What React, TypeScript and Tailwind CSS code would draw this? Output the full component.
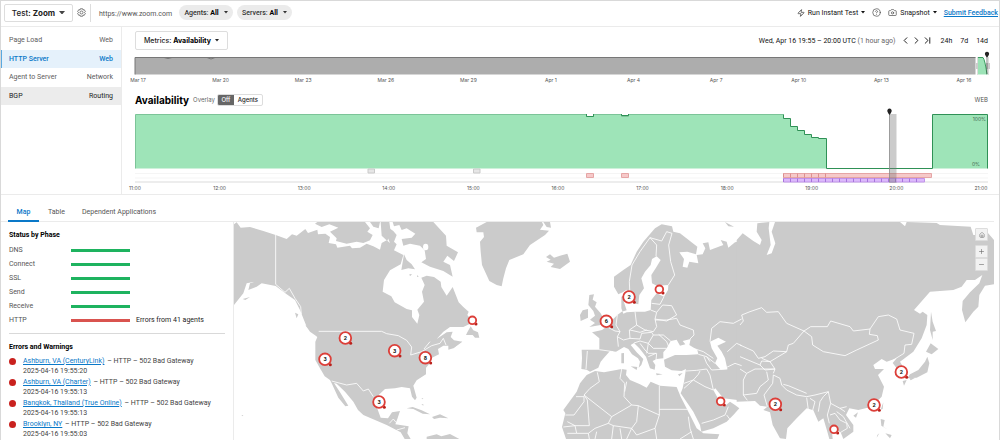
import React from "react";
import { Camera, ChevronLast, ChevronLeft, ChevronRight, CircleHelp, House, Minus, Plus, Zap } from "lucide-react";

const testTypes = [
  { name: "Page Load", layer: "Web", style: "border-transparent text-[#5c5c5c]" },
  { name: "HTTP Server", layer: "Web", style: "border-[#5aa9e0] bg-[#e5f1fb] text-[#0a78c8] font-medium" },
  { name: "Agent to Server", layer: "Network", style: "border-transparent text-[#5c5c5c]" },
  { name: "BGP", layer: "Routing", style: "border-transparent bg-[#ececec] text-[#222]" },
];

const dates = ["Mar 17", "Mar 20", "Mar 23", "Mar 26", "Mar 29", "Apr 1", "Apr 4", "Apr 7", "Apr 10", "Apr 13", "Apr 16"];
const hours = ["11:00", "12:00", "13:00", "14:00", "15:00", "16:00", "17:00", "18:00", "19:00", "20:00", "21:00"];
const phases = ["DNS", "Connect", "SSL", "Send", "Receive", "HTTP"];

const errors = [
  { agent: "Ashburn, VA (CenturyLink)", time: "2025-04-16 19:55:20" },
  { agent: "Ashburn, VA (Charter)", time: "2025-04-16 19:55:13" },
  { agent: "Bangkok, Thailand (True Online)", time: "2025-04-16 19:55:13" },
  { agent: "Brooklyn, NY", time: "2025-04-16 19:55:03" },
];

const clusters = [
  { x: 334, y: 348, count: 2 },
  { x: 273, y: 412, count: 3 },
  { x: 482, y: 386, count: 3 },
  { x: 574, y: 407, count: 8 },
  { x: 435, y: 540, count: 3 },
  { x: 715, y: 295, count: 0 },
  { x: 1185, y: 225, count: 2 },
  { x: 1117, y: 298, count: 6 },
  { x: 1276, y: 202, count: 0 },
  { x: 1460, y: 538, count: 0 },
  { x: 2002, y: 450, count: 2 },
  { x: 1624, y: 547, count: 2 },
  { x: 1920, y: 549, count: 2 },
  { x: 1800, y: 622, count: 0 },
];

const redTicks = [0, 7, 14, 21, 28, 35, 42];
const purpleTicks = Array.from({ length: 20 }, (_, i) => i * 7);

function Caret({ className = "w-[5px]" }: { className?: string }) {
  return (
    <svg viewBox="0 0 10 6" className={className} fill="currentColor" aria-hidden="true">
      <path d="M0 0h10L5 6z" />
    </svg>
  );
}

function Gear() {
  return (
    <svg viewBox="0 0 24 24" className="size-[9px] text-[#555]" fill="none" stroke="currentColor" strokeWidth="2" strokeLinejoin="round" aria-hidden="true">
      <path d="M9 2h6l1 3.2 3.3-.7 3 5.2-2.3 2.3 2.3 2.3-3 5.2-3.3-.7L15 22H9l-1-3.2-3.3.7-3-5.2L4 12 1.700 9.700l3-5.200L8 5.200z" />
      <circle cx="12" cy="12" r="4" />
    </svg>
  );
}

function Header() {
  return (
    <header className="flex h-[26px] items-center border-b border-[#ebebeb] pb-[2px] pl-[3px] pr-px">
      <button className="flex h-[18px] w-[69px] shrink-0 items-center justify-center gap-1 whitespace-nowrap rounded-[2px] border border-[#ddd] font-['Inter',sans-serif] text-[8px] font-medium">
        <span>Test: <b className="font-bold">Zoom</b></span>
        <Caret className="w-[6px] text-[#444]" />
      </button>
      <button className="ml-1 shrink-0" aria-label="Test settings"><Gear /></button>
      <span className="ml-1 h-[18px] w-px bg-[#ddd]" />
      <span className="ml-2 mt-[3px] w-[72px] whitespace-nowrap text-[#555]">https://www.zoom.com</span>
      <div className="ml-2 flex gap-1">
        <button className="flex h-[15px] w-[54px] items-center justify-center gap-[5px] whitespace-nowrap rounded-full bg-[#ebebeb] font-medium text-[#333]">
          <span>Agents: <b className="text-black">All</b></span><Caret className="w-1" />
        </button>
        <button className="flex h-[15px] w-[55px] items-center justify-center gap-[5px] whitespace-nowrap rounded-full bg-[#ebebeb] font-medium text-[#333]">
          <span>Servers: <b className="text-black">All</b></span><Caret className="w-1" />
        </button>
      </div>
      <div className="ml-auto flex items-center whitespace-nowrap text-[#111]">
        <button className="flex items-center gap-[3px]"><Zap className="size-2" strokeWidth={1.8} />Run Instant Test<Caret className="w-1" /></button>
        <button className="ml-[7px]" aria-label="Help"><CircleHelp className="size-[9px] text-[#444]" strokeWidth={1.8} /></button>
        <button className="ml-[7px] flex items-center gap-[3px]"><Camera className="size-[9px] text-[#444]" strokeWidth={1.8} />Snapshot<Caret className="w-1" /></button>
        <a href="#feedback" className="ml-[7px] font-medium text-[#0a78c8] underline">Submit Feedback</a>
      </div>
    </header>
  );
}

function Timeline() {
  return (
    <svg viewBox="0 0 853 23" preserveAspectRatio="none" className="mt-[2px] h-[23px] w-full overflow-visible" aria-label="Availability history">
      <path d="M0 5.500H840.500V22.500H0z" fill="#adadad" />
      <path d="M0 22.500V5.500H840.500" fill="none" stroke="#777" />
      <path d="M29 5.500q4 2 8 0M72 5.500q4 3 8 0" fill="none" stroke="#777" />
      <path d="M842.500 5V23M853.500 5V23" stroke="#ddd" />
      <rect x="841" y="11" width="3" height="6" fill="#ccc" />
      <rect x="851" y="11" width="4" height="6" fill="#ccc" />
      <path d="M843 22.500V5.500H848Q850 8 852 22.500z" fill="#9de3b7" />
      <path d="M843 5.500H848Q850 8 852 22.500" fill="none" stroke="#3a9a5f" />
      <path d="M852 3V22" stroke="#333" strokeWidth=".6" />
      <path d="M850 2.400a2.100 2.100 0 1 1 4 0Q853.500 4 852 5.500Q850.500 4 850 2.400z" fill="#222" />
    </svg>
  );
}

function AvailabilityChart() {
  return (
    <div className="relative mt-[2px]">
      <svg viewBox="0 0 853 75" preserveAspectRatio="none" className="h-[75px] w-full" aria-label="Availability over time">
        <path d="M0 65.500H853M0 70H853" stroke="#f5f5f5" />
        <path d="M0 74H853" stroke="#ededed" strokeWidth="2" />
        <path
          d="M.500 60.500V6.500H451.500V8.500H458.500V6.500H486.500V8.500H493.500V6.500H648.500V10.500H655.500V18.500H662.500V22.500H669.500V26.500H676.500V29.500H683.500V30.500H691.500V60.500H797.500V6.500H852.500V60.500z"
          fill="#9ee4b8"
        />
        <path
          d="M.500 60.500V6.500H451.500V8.500H458.500V6.500H486.500V8.500H493.500V6.500H648.500"
          fill="none" stroke="#7cc498"
        />
        <path
          d="M451.500 6V8.500H458.500V6M486.500 6V7.500H493.500V6M648.500 6.500V10.500H655.500V18.500H662.500V22.500H669.500V26.500H676.500V29.500H683.500V30.500H691.500V60.500H797.500V6.500H852.500V60.500"
          fill="none" stroke="#2f9156"
        />
        <path d="M452 5V7.500H458V5zM487 5V6.500H493V5z" fill="#fff" />
        <g fill="#e6e6e6" stroke="#cacaca">
          <path d="M233 61H239.500V65H233zM338.500 61H345V65H338.500z" />
        </g>
        <g fill="#f6c9c9" stroke="#e5a5a5">
          <path d="M451.500 65.500H458.500V69.500H451.500zM486.500 65.500H493.500V69.500H486.500z" />
          <path d="M648.500 65.500H796.500V69.500H648.500z" />
          {redTicks.map((t) => <path key={t} d={`M${648.5 + t} 65.500V69.500`} stroke="#dd8f8f" />)}
        </g>
        <g fill="#dcb9fb" stroke="#c193ea">
          <path d="M648.500 70.500H789.500V74H648.500z" />
          {purpleTicks.map((t) => <path key={t} d={`M${648.5 + t} 70.500V74`} stroke="#a774dc" />)}
        </g>
        <rect x="754" y="6" width="7.500" height="69" fill="#777" fillOpacity=".38" />
        <path d="M754.500 6V74" stroke="#888" strokeWidth=".7" />
        <path d="M752.400 3.400a2.200 2.200 0 1 1 4.200 0Q756 5 754.500 7Q753 5 752.400 3.400z" fill="#222" />
      </svg>
      <span className="absolute right-[2px] top-[7px] font-['Inter',sans-serif] text-[5px] leading-[8px] text-[#3f6b50]">100%</span>
      <span className="absolute right-2 top-[52px] font-['Inter',sans-serif] text-[5px] leading-[8px] text-[#3f6b50]">0%</span>
    </div>
  );
}

function WorldMap() {
  return (
    <svg viewBox="0 0 2280 654" preserveAspectRatio="xMidYMin slice" className="block h-[218px] w-full" role="img" aria-label="Agents on a world map">
      <g fill="#cbcbcb">
        <g transform="translate(-12 -21)">
          <path d="M12 28L20 22L32 38L60 36L100 48L137 60L170 72L186 58L200 62L226 42L234 54L262 44L264 58L286 56L300 66L296 84L318 88L322 98L360 92L366 100L390 98L410 86L430 94L450 104L455 84L470 76L480 84L470 60L478 40L490 48L500 60L492 80L500 88L492 106L520 120L512 148L480 166L462 195L458 230L484 244L494 262L530 282L546 286L546 306L562 326L568 300L562 284L582 260L576 230L584 210L574 188L590 182L612 186L632 200L634 216L650 242L668 216L686 262L700 276L716 290L712 300L730 322L700 336L660 336L640 350L620 372L650 352L668 350L662 366L672 376L697 380L670 400L655 404L655 392L640 392L624 402L627 418L606 428L600 444L588 458L588 478L560 496L550 512L560 548L555 556L546 545L540 520L515 516L495 520L465 522L446 540L440 575L452 608L474 610L486 592L510 588L502 612L496 628L536 634L532 655L542 672L524 672L512 652L470 630L400 600L384 585L370 560L345 530L320 506L312 504L330 532L355 572L346 574L325 548L305 505L300 495L284 484L270 460L256 435L256 380L262 366L255 358L230 335L210 285L195 255L170 238L137 213L95 205L80 215L55 225L60 205L74 200L50 205L40 235L12 270z" />
          <path d="M262 21L255 26L275 36L298 28L325 38L300 50L320 70L318 78L350 86L380 80L400 84L420 76L428 60L412 50L420 40L405 21zM420 21L430 35L446 40L450 21zM452 21L455 62L472 78L482 50L478 21z" />
          <path d="M488 21L492 34L508 30L515 45L530 40L556 56L545 68L515 72L520 92L540 86L570 92L584 106L588 132L574 142L600 155L640 168L668 185L660 150L640 140L652 122L672 138L684 112L650 92L648 62L610 21zM522 118L514 165L535 160L555 163L545 148L530 135zM538 178L546 177L540 184zM562 180L566 185L561 186z" />
          <path d="M712 352L722 334L730 346L744 352L748 368L735 368L728 360L708 360zM660 384L672 392L697 378L670 400zM38 252L60 246L46 255zM195 293L205 298L200 310zM226 330L258 350L266 368L240 350z" />
          <path d="M530 580L548 576L575 586L600 598L578 596L550 582zM606 606L630 598L655 610L630 608L612 612zM574 568L580 568L580 572zM574 550L580 550L578 553zM590 665L620 658L634 664L660 657L688 672L590 672zM34 600L40 601L38 604z" />
        </g>
        <g transform="translate(738 -21)">
          <path d="M20 21L-12 38L-10 52L10 52L12 66L0 80L2 110L6 150L28 198L50 210L65 214L70 190L78 160L88 135L130 118L150 90L195 60L207 47L180 44L190 30L186 21zM190 21L210 21L213 38L200 36z" />
          <path d="M198 126L210 118L222 128L240 122L262 116L270 140L240 162L212 156L222 146L200 140L212 134z" />
          <path d="M328 240L342 238L338 254L350 262L345 275L362 295L374 318L362 330L328 336L345 324L330 314L345 302L340 288L325 270zM308 286L324 282L324 308L302 318L300 300z" />
          <path d="M402 185L402 215L415 238L428 232L440 224L450 245L460 265L475 268L478 240L492 220L484 190L495 170L512 150L516 132L530 124L542 135L528 158L514 180L516 205L530 212L565 210L564 225L552 245L530 235L514 255L512 285L495 290L465 290L440 292L430 296L424 280L424 245L436 240L432 262L440 286L425 290L412 300L400 312L380 335L366 345L336 352L358 370L358 404L305 404L306 430L304 462L320 464L330 470L355 458L362 440L372 428L390 408L408 410L432 396L445 402L456 418L474 430L480 440L476 458L484 450L490 432L470 412L452 390L462 384L478 400L498 425L510 460L524 464L526 450L518 438L530 432L550 430L550 412L560 400L572 378L590 374L600 392L616 388L608 378L632 372L628 390L652 405L655 418L620 420L585 420L552 434L555 455L575 466L605 468L618 462L612 500L608 520L602 535L640 590L660 630L664 650L700 640L740 620L760 600L778 580L765 570L750 560L732 575L722 565L700 525L706 520L730 550L790 557L790 78L765 82L745 98L740 80L722 75L730 90L690 105L685 82L668 85L676 100L668 118L650 120L655 145L628 140L622 158L608 155L612 132L598 112L622 110L648 118L652 95L600 55L580 50L576 34L545 28L525 40L490 80L470 110L452 150L430 165z" />
          <path d="M320 480L345 468L372 472L425 462L440 464L438 480L450 495L480 508L500 518L512 500L540 512L590 516L602 545L630 600L650 640L670 655L718 658L712 672L258 672L246 636L256 595L250 585L290 530L300 505zM424 415L432 414L432 445L424 445zM452 454L472 456L470 465zM528 475L548 478L530 481zM594 478L608 474L598 484zM735 21L762 35L745 34z" />
        </g>
        <g transform="translate(1518 -21)">
          <path d="M-10 75L-10 560L45 558L60 572L82 575L70 585L90 592L98 630L120 670L138 672L142 640L170 610L200 580L220 586L235 620L250 610L262 650L268 672L278 672L275 640L302 652L310 672L340 650L340 630L318 600L328 580L355 585L395 575L425 545L432 515L414 480L432 462L405 462L400 450L425 432L440 440L470 430L458 444L470 460L470 480L495 490L498 470L480 440L520 410L545 370L560 330L562 300L548 290L540 296L522 285L570 230L640 225L665 215L680 195L705 195L727 180L718 205L690 232L668 258L666 285L676 322L700 290L715 275L718 240L735 212L762 208L762 75L742 52L742 60L700 60L692 35L600 30L590 24L500 21L495 34L480 21L105 21L95 50L106 85L95 115L80 120L92 90L86 40L88 21L52 25L50 50L65 75L60 90L40 78L8 55z" />
          <path d="M573 290L578 320L588 348L578 350L578 375L570 345zM572 385L595 402L575 418L558 410zM562 425L568 445L562 472L530 488L502 490L510 478L535 465L555 440zM488 498L500 495L492 512zM508 490L526 488L512 496zM430 562L428 582L422 584zM340 602L354 592L348 608zM422 612L434 615L430 635L445 645L424 632zM436 655L455 660L450 670zM412 660L418 655L410 668z" />
        </g>
      </g>
      <g fill="#fff">
        <path transform="translate(738 -21)" d="M690 380L715 368L738 380L712 392L725 410L735 430L742 462L722 464L705 445L712 430L695 400z" />
        <ellipse cx="575" cy="75" rx="8" ry="10" />
      </g>
      <g fill="none" stroke="#fff" strokeWidth="2.500" strokeLinejoin="round">
        <g transform="translate(-12 -21)">
          <path d="M137 60V208L165 232L178 220L195 250L212 275L214 298M266 349H455L470 356L505 362L530 376L545 396L542 420L575 410L605 392L630 385L640 370L648 390M305 498L350 510L380 505L400 528L415 522L430 545M478 625L490 612L498 622M500 645L525 638M582 402L600 380" />
        </g>
        <g transform="translate(738 -21)">
          <path d="M450 245L448 200L456 150L480 110L510 68L530 90L528 124M510 68L545 78L560 50L576 55L566 90L572 140L584 180L565 210" />
          <path d="M515 265L540 268L552 245M512 285L530 292L548 270L575 272L590 300L560 318L525 312L530 292M465 290L470 330L495 345L520 350L530 335L525 312M525 315H560L590 310L600 330L640 345L642 360L630 372M412 300L408 330L420 350L412 365L430 375L450 370L448 345L470 330M380 335L405 348L420 350M358 404L400 410M415 395L412 365M322 408L318 462M450 345L480 352L500 345M450 370L480 372L485 355L515 352L520 360L505 385L480 378L462 384M520 360L550 360L572 378M505 385L520 400L560 400M480 385L495 405L505 415L530 415L528 435M505 385L500 415M505 425L528 415M536 358L560 380L566 395M640 400L670 410L700 430M655 418L680 425L705 445M672 425L680 445L695 465L742 462M680 425L690 440M618 468L650 466L680 462L690 480L700 525M612 505L640 495L655 478L660 468M612 520L640 495L675 515L700 525M690 380L695 340L720 320L760 325L785 312M742 410L770 385L785 392M738 458L765 445L785 452M665 625L700 615L735 600L745 575M740 600L755 620" />
          <path d="M352 472L358 500L330 520L312 540L395 605L455 570L432 545L434 505L420 490L425 462M288 545H312V560L282 600H256M322 555L328 632H285L262 620M440 500L434 530M538 512V600M538 583H622M455 570L475 572L538 600L525 640L530 672M312 540L322 555M395 605L385 625L345 640L325 655L328 672M475 572L470 620L455 640L400 632L385 625M455 640L470 660L525 640M250 636L285 632L290 655L262 655M290 655L325 655M400 632L395 672M640 672L630 640L625 605M345 672L350 650M420 640L425 672M455 640L440 672M600 672L635 650" />
        </g>
        <g transform="translate(1518 -21)">
          <path d="M0 330L10 318L5 300L30 290L65 278L80 292L115 290L140 325L192 348L212 335L262 335L272 318L330 335L340 348L390 342L415 305L445 300L470 312L480 345L522 355L515 388L495 390L492 415L455 438M192 348L215 365L218 390L250 410L315 422L350 405L415 375L412 362L388 358L390 342M192 348L160 385L145 390L140 410L90 440L105 462L100 475M0 390L40 408L55 430L75 425L100 408L140 410M65 430L85 438L90 440L65 438L60 450L0 425M60 450L75 465L105 462M0 462L20 475L45 462L105 462M20 475L10 495V540L50 535L60 515L85 495L80 470M10 540L22 556M100 480L120 490L125 510L140 525L170 540L200 545L225 540L265 530L250 545L240 560L235 590M100 480L98 505L72 540L82 575M130 508L145 512L200 535M200 548L205 585M210 550L225 560L218 586M265 530L272 565L262 600L268 625M272 565L300 580L320 575M270 600L285 595L300 615L320 625L322 640L302 652M290 590L310 605L330 640M300 580L315 590" />
        </g>
      </g>
      {clusters.map((c) => (
        <g key={`${c.x}-${c.y}`}>
          <circle cx={c.x + (c.count ? 16 : 11)} cy={c.y + (c.count ? 16 : 11)} r="4.500" fill="#b9201b" />
          <circle cx={c.x} cy={c.y} r={c.count ? 17.5 : 11.5} fill="#fff" stroke="#dc3f39" strokeWidth="5.500" />
          {c.count > 0 && (
            <text x={c.x} y={c.y + 6} textAnchor="middle" fontSize="17" fontWeight="700" fill="#111">{c.count}</text>
          )}
        </g>
      ))}
    </svg>
  );
}

export default function App() {
  return (
    <div className="relative flex min-h-screen flex-col overflow-hidden border border-[#d9d9d9] bg-white font-['Roboto',sans-serif] text-[7px] leading-[10px] text-[#222]">
      <Header />
      <div className="flex border-b border-[#ebebeb]">
        <nav className="w-[121px] shrink-0 border-r border-[#ebebeb] pt-1">
          <div className="grid h-[74px] grid-rows-4">
            {testTypes.map((t) => (
              <a key={t.name} href="#test" className={`flex items-center justify-between border-l pl-[7px] pr-2 ${t.style}`}>
                <span>{t.name}</span><span>{t.layer}</span>
              </a>
            ))}
          </div>
        </nav>
        <main className="min-w-0 flex-1 pb-[2px] pl-[13px] pr-[11px] pt-1">
          <div className="flex h-[19px] items-center">
            <button className="flex h-[19px] w-[93px] items-center justify-center gap-1 whitespace-nowrap rounded-[2px] border border-[#ddd] font-['Inter',sans-serif] text-[7px] font-medium">
              <span>Metrics: <b className="font-bold text-black">Availability</b></span><Caret className="w-1" />
            </button>
            <div className="ml-auto flex items-center whitespace-nowrap text-[#111]">
              <span>Wed, Apr 16 19:55 – 20:00 UTC <span className="text-[#666]">(1 hour ago)</span></span>
              <button className="ml-1" aria-label="Previous"><ChevronLeft className="size-[11px]" /></button>
              <button aria-label="Next"><ChevronRight className="size-[11px]" /></button>
              <button aria-label="Latest"><ChevronLast className="size-[11px]" /></button>
              <div className="ml-2 flex gap-2">
                <button>24h</button><button>7d</button><button>14d</button>
              </div>
            </div>
          </div>
          <Timeline />
          <div className="-ml-[17px] mr-1 mt-px flex justify-between font-['Inter',sans-serif] text-[5px] leading-[8px] text-[#555]">
            {dates.map((d) => <span key={d} className="w-10 text-center">{d}</span>)}
          </div>
          <div className="mt-[10px] flex h-3 items-center font-['Inter',sans-serif]">
            <h1 className="text-[10px] font-bold leading-3 text-black">Availability</h1>
            <span className="ml-1 text-[6px] text-[#666]">Overlay</span>
            <div className="ml-[2px] flex h-3 overflow-hidden rounded-[2px] border border-[#ddd] text-[6px] font-medium">
              <button className="w-4 bg-[#666] text-white">Off</button>
              <button className="w-7">Agents</button>
            </div>
            <span className="ml-auto text-[6px] text-[#555]">WEB</span>
          </div>
          <AvailabilityChart />
          <div className="-ml-[15px] -mr-2 mt-px flex justify-between font-['Inter',sans-serif] text-[5px] leading-[8px] text-[#555]">
            {hours.map((h) => <span key={h} className="w-[30px] text-center">{h}</span>)}
          </div>
        </main>
      </div>
      <div className="mr-[5px] flex h-[27px] items-end gap-[9px] border-b border-[#ebebeb] pl-[7px] text-[#555]">
        <button className="-mb-px h-5 w-[31px] border-b-2 border-[#0a78c8] pt-[2px] font-medium text-[#0a78c8]">Map</button>
        <button className="h-5 pt-px">Table</button>
        <button className="ml-2 h-5 pt-px">Dependent Applications</button>
      </div>
      <div className="mr-[5px] flex flex-1">
        <aside className="w-[233px] shrink-0 border-r border-[#ebebeb] pl-2 pr-2 pt-2">
          <h2 className="font-bold text-black">Status by Phase</h2>
          <dl className="mt-[3px]">
            {phases.map((p) => (
              <div key={p} className="flex h-[14px] items-center">
                <dt className="w-[62px] text-[#555]">{p}</dt>
                <dd className="flex items-center gap-[6px] whitespace-nowrap">
                  <span className={`h-[3px] w-[59px] ${p === "HTTP" ? "bg-[#d9534f]" : "bg-[#1eb35f]"}`} />
                  {p === "HTTP" && "Errors from 41 agents"}
                </dd>
              </div>
            ))}
          </dl>
          <hr className="mt-[6px] border-[#d9d9d9]" />
          <h2 className="mt-2 font-bold text-black">Errors and Warnings</h2>
          <ul className="mt-1">
            {errors.map((e) => (
              <li key={e.agent} className="flex h-[21px] gap-[7px] whitespace-nowrap text-[#444]">
                <span className="mt-[2px] size-[7px] shrink-0 rounded-full bg-[#c9211e]" />
                <div>
                  <p><a href="#agent" className="mr-px text-[#0a78c8] underline">{e.agent}</a> – HTTP – 502 Bad Gateway</p>
                  <p>{e.time}</p>
                </div>
              </li>
            ))}
          </ul>
        </aside>
        <section className="relative min-w-0 flex-1">
          <WorldMap />
          <div className="absolute right-[6px] top-[6px] flex flex-col text-[#666]">
            <button className="mb-1 flex size-[13px] items-center justify-center rounded-[1px] border border-[#ddd] bg-[#f2f2f2]" aria-label="Reset view"><House className="size-[6px]" /></button>
            <button className="flex size-[13px] items-center justify-center rounded-[1px] border border-[#ddd] bg-[#f2f2f2]" aria-label="Zoom in"><Plus className="size-[7px]" /></button>
            <button className="flex size-[13px] items-center justify-center rounded-[1px] border border-[#ddd] bg-[#f2f2f2]" aria-label="Zoom out"><Minus className="size-[7px]" /></button>
          </div>
        </section>
      </div>
    </div>
  );
}
